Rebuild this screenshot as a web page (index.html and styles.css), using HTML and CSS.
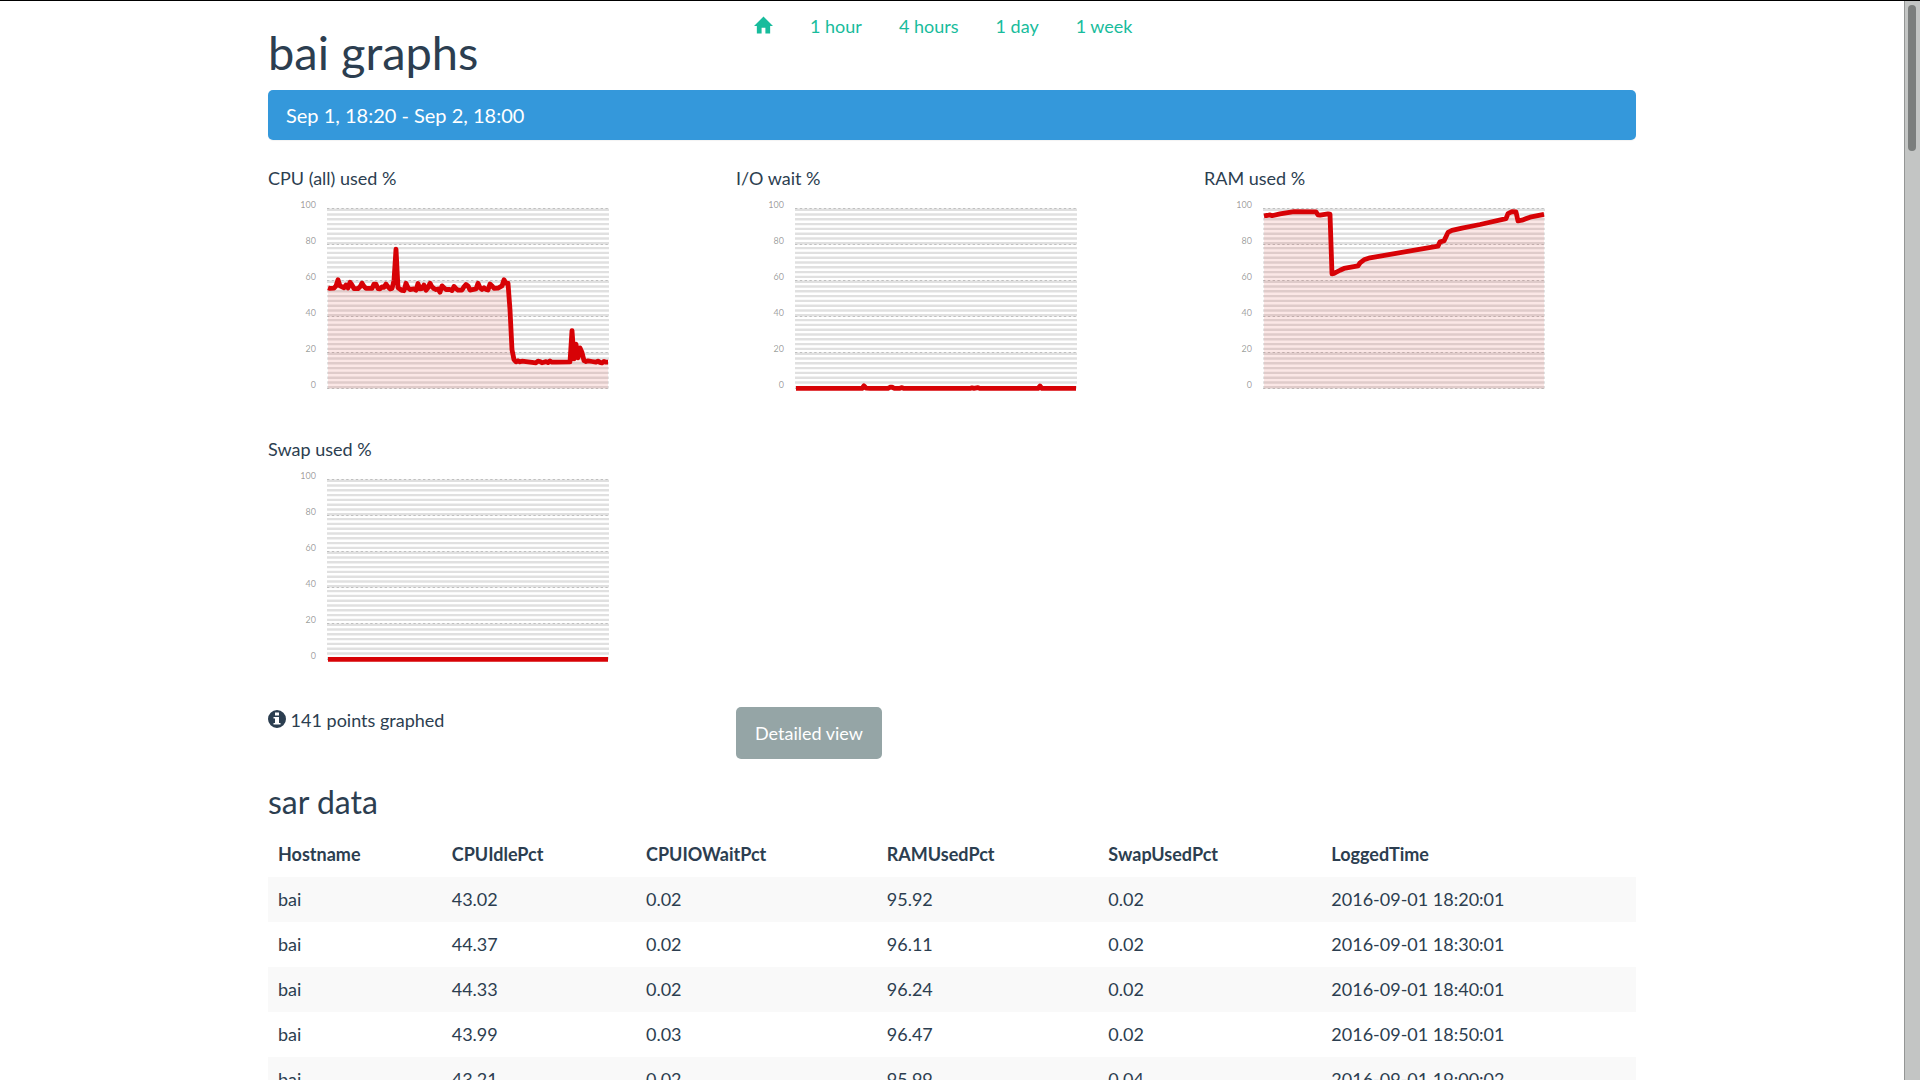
FILE: index.html
```
<!DOCTYPE html>
<html lang="en">
<head>
<meta charset="utf-8">
<meta name="viewport" content="width=device-width, initial-scale=1">
<title>bai graphs</title>
<link rel="stylesheet" href="styles.css">
</head>
<body>
<main class="page">
  <div class="container">
    <header class="columns header">
      <h1 class="title">bai graphs</h1>
      <nav class="nav" aria-label="Time range">
        <a href="#home" aria-label="Home"><svg class="icon" viewBox="0 0 20 18" aria-hidden="true"><path d="M10 0L20 10H17V18H12V12H8V18H3V10H0Z"/></svg></a>
        <a href="#hour">1 hour</a>
        <a href="#hours">4 hours</a>
        <a href="#day">1 day</a>
        <a href="#week">1 week</a>
      </nav>
    </header>

    <div class="banner">Sep 1, 18:20 - Sep 2, 18:00</div>

    <section class="columns" id="charts"></section>

    <div class="columns">
      <p class="points"><svg class="icon" viewBox="0 0 18 18" aria-hidden="true"><path fill-rule="evenodd" d="M9 0a9 9 0 1 1 0 18a9 9 0 1 1 0-18ZM7 2.500V5.500H11V2.500ZM5.500 7V8.500H7V13H5.500V14.500H12.500V13H11V7Z"/></svg> 141 points graphed</p>
      <div><button class="button" type="button">Detailed view</button></div>
    </div>

    <h2 class="subtitle">sar data</h2>
    <table class="table">
      <colgroup><col class="c1"><col class="c2"><col class="c3"><col class="c4"><col class="c5"><col></colgroup>
      <thead>
        <tr><th scope="col">Hostname</th><th scope="col">CPUIdlePct</th><th scope="col">CPUIOWaitPct</th><th scope="col">RAMUsedPct</th><th scope="col">SwapUsedPct</th><th scope="col">LoggedTime</th></tr>
      </thead>
      <tbody>
        <tr><td>bai</td><td>43.02</td><td>0.02</td><td>95.92</td><td>0.02</td><td>2016-09-01 18:20:01</td></tr>
        <tr><td>bai</td><td>44.37</td><td>0.02</td><td>96.11</td><td>0.02</td><td>2016-09-01 18:30:01</td></tr>
        <tr><td>bai</td><td>44.33</td><td>0.02</td><td>96.24</td><td>0.02</td><td>2016-09-01 18:40:01</td></tr>
        <tr><td>bai</td><td>43.99</td><td>0.03</td><td>96.47</td><td>0.02</td><td>2016-09-01 18:50:01</td></tr>
        <tr><td>bai</td><td>43.21</td><td>0.02</td><td>95.99</td><td>0.04</td><td>2016-09-01 19:00:02</td></tr>
      </tbody>
    </table>
  </div>
</main>
<div class="scrollbar" aria-hidden="true"><div class="thumb"></div></div>
<script src="charts.js"></script>
</body>
</html>
```
FILE: styles.css
```
* { box-sizing: border-box; }

body {
  display: flex;
  height: 100vh;
  margin: 0;
  overflow: hidden;
  border-top: 1px solid #000;
  background: #fff;
  color: #2c3e50;
  font: 18px/26px Lato, "Open Sans", sans-serif;
}

.page {
  flex: 1;
  min-width: 0;
  overflow: hidden;
  padding: 0 18px;
}

.container {
  max-width: 1368px;
  margin: 0 auto;
}

.columns {
  display: grid;
  grid-template-columns: repeat(3, minmax(0, 1fr));
  column-gap: 36px;
}

.header { padding-top: 12px; }

.title {
  margin: 13px 0 12px;
  font-size: 47px;
  font-weight: 400;
  line-height: 52px;
}

.nav {
  display: flex;
  align-items: flex-start;
  gap: 1px;
  grid-column: span 2;
}

.nav a {
  padding: 0 18px;
  color: #18bc9c;
  text-decoration: none;
  white-space: nowrap;
}

.icon {
  width: 18px;
  height: 18px;
  fill: currentColor;
  vertical-align: -1px;
}

.nav .icon { width: 19px; }

.banner {
  margin-bottom: 25px;
  padding: 12px 18px;
  border-radius: 5px;
  background: #3498db;
  box-shadow: 0 1px 1px rgba(0, 0, 0, .05);
  color: #fff;
  font-size: 20px;
}

.chart-title {
  margin: 0;
  font-size: 18px;
  font-weight: 400;
}

.chart {
  display: block;
  width: 100%;
  height: 245px;
}

.stripes {
  stroke: rgba(0, 0, 0, .12);
  stroke-dasharray: 2.4;
  stroke-width: 282;
}

.grid {
  stroke: rgba(0, 0, 0, .2);
  stroke-dasharray: 2.4;
  stroke-width: 1.2;
}

.label {
  fill: rgba(0, 0, 0, .4);
  font-size: 9px;
  text-anchor: end;
}

.line {
  fill: none;
  stroke: #d70206;
  stroke-width: 4.8;
  stroke-linejoin: round;
}

.area {
  fill: #d71206;
  fill-opacity: .1;
}

.points { margin: 0; }

.button {
  height: 52px;
  padding: 0 19px;
  border: 0;
  border-radius: 5px;
  background: #95a5a6;
  color: #fff;
  font: inherit;
}

.subtitle {
  margin: 26px 0 13px;
  font-size: 32px;
  font-weight: 400;
  line-height: 34px;
}

.table {
  width: 100%;
  border-collapse: collapse;
  table-layout: fixed;
}

.table th,
.table td {
  padding: 10px;
  line-height: 25px;
  text-align: left;
}

.table tbody tr:nth-child(odd) { background: #f9f9f9; }

.c1 { width: 12.7%; }
.c2 { width: 14.2%; }
.c3 { width: 17.6%; }
.c4 { width: 16.2%; }
.c5 { width: 16.3%; }

.scrollbar {
  width: 16px;
  padding: 4px 4px 4px 3px;
  border-left: 1px solid #949695;
  background: #c3c5c4;
}

.thumb {
  height: 146px;
  border-radius: 4px;
  background: #7b7e7d;
}
```
FILE: charts.js
```
// Each series is a list of [sample index, percent] pairs over 141 samples.
const series = [
  ["CPU (all) used %", [[0,56],[1,55.600],[3,55.800],[4,57],[5,60.400],[6,57],[8,56],[9,57.500],[10,55.800],[11,59],[12,57.500],[13,55.500],[15,55.500],[16,56.500],[17,58.500],[18,56.800],[19,55.600],[22,55.600],[23,58],[24,58],[25,55.500],[26,55.300],[27,56.500],[28,56.200],[29,58],[30,56.500],[31,55.300],[32,55.600],[33,60],[34,77.400],[35,56],[36,55.200],[37,54.500],[38,54.300],[39,58.500],[40,56],[41,55],[43,55.300],[44,54.600],[45,58.300],[46,55.400],[47,55.500],[48,57.500],[49,54.600],[50,56],[51,58.500],[52,56.500],[53,55.500],[54,55],[55,55.300],[56,53.500],[57,57],[58,56],[59,55],[61,55],[62,54.400],[63,56.700],[64,55.500],[65,54.600],[67,54.700],[68,56.500],[69,57.800],[70,57],[71,54.700],[74,55.300],[75,58.500],[76,56],[77,55],[78,56],[79,55],[80,54.700],[81,58.100],[82,57],[83,55.700],[85,55.800],[87,57],[88,60.400],[89,58.500],[90,58.500],[91,43.700],[92,21.500],[93,16],[94,14.800],[95,15.400],[96,14.800],[97,15.200],[104,14.300],[105,15.200],[106,15],[107,14.300],[109,14.900],[110,14.400],[111,15.300],[112,14.600],[114,14.700],[121,14.800],[122,32.200],[123,16.500],[124,24.600],[125,17],[126,22.600],[127,20],[128,15.500],[129,15],[130,15.400],[132,15],[134,14.600],[135,15.200],[136,14.500],[137,14.200],[138,15.100],[139,14.600],[140,14.600]]],
  ["I/O wait %", [[0,.02],[33,.02],[34,1.500],[35,.2],[37,.1],[46,.1],[47,.7],[48,.8],[49,.1],[52,.1],[53,.5],[54,.02],[87,.02],[88,.4],[89,.1],[91,.5],[92,.02],[121,.02],[122,1.400],[123,.02],[140,.02]]],
  ["RAM used %", [[0,95.920],[1,96.110],[2,96.240],[3,96.470],[4,95.990],[8,97],[15,98.300],[26,98.100],[27,96.500],[28,96.300],[32,97],[33,96.900],[34,63.700],[35,63.900],[38,65.700],[40,66.700],[47,68.100],[48,69.800],[50,71.500],[53,72.600],[87,79.100],[88,81.500],[90,82],[92,86.700],[94,87.800],[99,89.100],[108,91.100],[121,94.400],[122,97.200],[124,98.300],[126,98.100],[127,93.100],[129,93.500],[133,95.200],[140,96.700]]],
  ["Swap used %", [[0,.02],[20,.05],[28,.1],[140,.1]]]
];

const left = 60, top0 = 17.5, height = 180;
const x = i => left + i * 2;
const y = v => +(top0 + height * (1 - v / 100)).toFixed(2);

document.getElementById("charts").innerHTML = series.map(([name, data]) => {
  const points = data.map(([i, v]) => `${x(i)},${y(v)}`).join(" ");
  const ticks = [0, 20, 40, 60, 80, 100].map(v =>
    `<line class="grid" x1="59" x2="341" y1="${y(v)}" y2="${y(v)}"/><text class="label" x="48" y="${y(v) - 1}">${v}</text>`).join("");
  return `<div><h2 class="chart-title">${name}</h2>
    <svg class="chart" role="img" aria-label="${name}">
      <line class="stripes" x1="200" x2="200" y1="${y(100)}" y2="${y(0)}"/>${ticks}
      <polygon class="area" points="${x(0)},${y(0)} ${points} ${x(140)},${y(0)}"/>
      <polyline class="line" points="${points}"/>
    </svg></div>`;
}).join("");
```
